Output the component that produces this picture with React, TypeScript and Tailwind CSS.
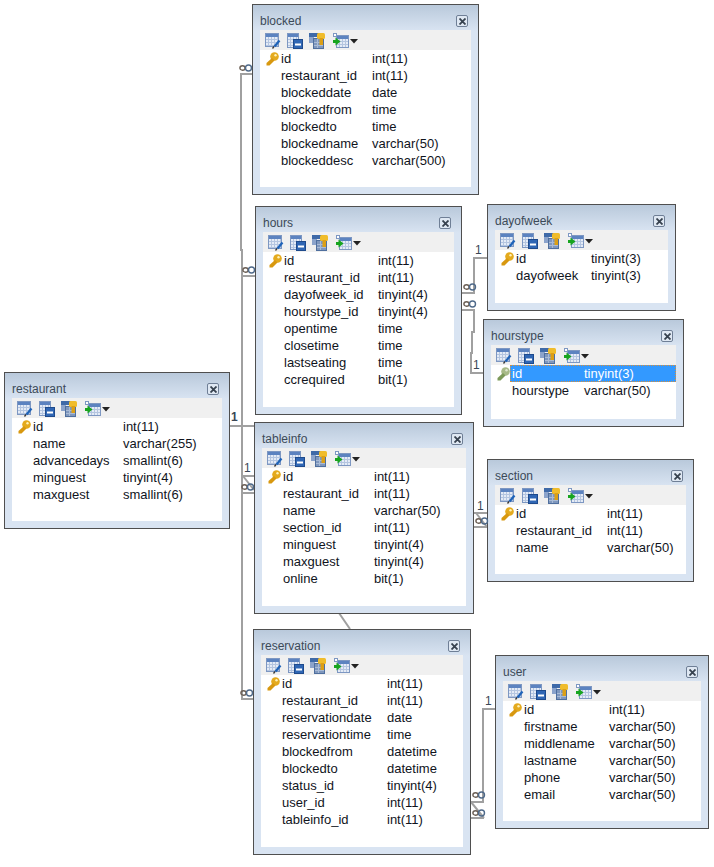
const FONT = "font-['Liberation_Sans',sans-serif]";

type Row = [string, string];
type T = {
  name: string; x: number; y: number; w: number; h: number; typeX: number; rows: Row[]; selected?: number;
};

const tables: T[] = [
  { name: "blocked", x: 252, y: 4, w: 227, h: 191, typeX: 120, rows: [["id","int(11)"],["restaurant_id","int(11)"],["blockeddate","date"],["blockedfrom","time"],["blockedto","time"],["blockedname","varchar(50)"],["blockeddesc","varchar(500)"]] },
  { name: "hours", x: 255, y: 206, w: 207, h: 209, typeX: 123, rows: [["id","int(11)"],["restaurant_id","int(11)"],["dayofweek_id","tinyint(4)"],["hourstype_id","tinyint(4)"],["opentime","time"],["closetime","time"],["lastseating","time"],["ccrequired","bit(1)"]] },
  { name: "dayofweek", x: 487, y: 204, w: 189, h: 107, typeX: 104, rows: [["id","tinyint(3)"],["dayofweek","tinyint(3)"]] },
  { name: "hourstype", x: 483, y: 319, w: 201, h: 108, typeX: 101, selected: 0, rows: [["id","tinyint(3)"],["hourstype","varchar(50)"]] },
  { name: "restaurant", x: 4, y: 372, w: 226, h: 157, typeX: 119, rows: [["id","int(11)"],["name","varchar(255)"],["advancedays","smallint(6)"],["minguest","tinyint(4)"],["maxguest","smallint(6)"]] },
  { name: "tableinfo", x: 254, y: 422, w: 220, h: 192, typeX: 120, rows: [["id","int(11)"],["restaurant_id","int(11)"],["name","varchar(50)"],["section_id","int(11)"],["minguest","tinyint(4)"],["maxguest","tinyint(4)"],["online","bit(1)"]] },
  { name: "section", x: 487, y: 459, w: 207, h: 123, typeX: 120, rows: [["id","int(11)"],["restaurant_id","int(11)"],["name","varchar(50)"]] },
  { name: "reservation", x: 253, y: 629, w: 218, h: 226, typeX: 134, rows: [["id","int(11)"],["restaurant_id","int(11)"],["reservationdate","date"],["reservationtime","time"],["blockedfrom","datetime"],["blockedto","datetime"],["status_id","tinyint(4)"],["user_id","int(11)"],["tableinfo_id","int(11)"]] },
  { name: "user", x: 495, y: 655, w: 214, h: 174, typeX: 114, rows: [["id","int(11)"],["firstname","varchar(50)"],["middlename","varchar(50)"],["lastname","varchar(50)"],["phone","varchar(50)"],["email","varchar(50)"]] },
];

function Grid({ x, y, w, h }: { x: number; y: number; w: number; h: number }) {
  const cols = [];
  for (let d = 3; d < w; d += 3) cols.push(d);
  const rws = [];
  for (let d = 6; d < h; d += 3) rws.push(d);
  return (
    <g>
      <rect x={x + 0.5} y={y + 0.5} width={w} height={h} fill="#e4ebf6" stroke="#7d97c2" />
      <rect x={x + 1} y={y + 1} width={w - 1} height={3} fill="#5c83c0" />
      {cols.map((d) => <line key={d} x1={x + d + 0.5} x2={x + d + 0.5} y1={y + 4} y2={y + h} stroke="#b4c5e0" />)}
      {rws.map((d) => <line key={d} y1={y + d + 0.5} y2={y + d + 0.5} x1={x + 1} x2={x + w} stroke="#b4c5e0" />)}
    </g>
  );
}

function Tools() {
  return (
    <div className="flex h-[20px] shrink-0 items-start bg-[#f0f0f0] pl-[5px] pt-[3px]">
      <svg width="16" height="16" viewBox="0 0 16 16">
        <Grid x={0} y={0} w={13} h={13} />
        <path d="M14.5 7.5 L9.5 13.5" stroke="#1f63b8" strokeWidth="2.2" />
        <path d="M9 13.5 L7.5 15.5" stroke="#333" strokeWidth="1.3" />
      </svg>
      <svg width="16" height="16" viewBox="0 0 16 16" className="ml-[6px]">
        <Grid x={0} y={0} w={11} h={14} />
        <rect x="6.5" y="6.5" width="9" height="9" fill="#2f66b4" stroke="#1e4a8c" />
        <rect x="8" y="10.5" width="6" height="2" fill="#fff" />
      </svg>
      <svg width="16" height="16" viewBox="0 0 16 16" className="ml-[6px]">
        <rect x="0" y="0" width="14" height="4" fill="#3f6aa8" />
        <rect x="0" y="4" width="5" height="6" fill="#8ba3cb" />
        <rect x="4.5" y="5.5" width="10" height="10" fill="#7f97bd" stroke="#4f6f9e" />
        <path d="M5 9.5h9M5 12.5h9M8.5 6v9" stroke="#a9bbd6" />
        <rect x="8" y="0" width="8" height="6" rx="1.5" fill="#f0bc2a" />
        <rect x="10.5" y="5" width="3.5" height="7" fill="#dc9f14" />
      </svg>
      <svg width="16" height="16" viewBox="0 0 16 16" className="ml-[8px]">
        <rect x="0.5" y="0.5" width="3" height="3" fill="#fff" stroke="#7d97c2" />
        <Grid x={3} y={2} w={12} h={12} />
        <path d="M0 7h2.5V4.5L7.5 8.5 2.5 12.5V10H0z" fill="#17a51f" />
      </svg>
      <svg width="8" height="5" viewBox="0 0 8 5" className="ml-px mt-[6px]">
        <path d="M0 0h8L4 4.5z" fill="#222" />
      </svg>
    </div>
  );
}

function Key({ faded }: { faded?: boolean }) {
  return (
    <svg width="13" height="14" viewBox="0 0 13 14" className="mt-[2px]">
      <circle cx="8.5" cy="4.5" r="4.3" fill={faded ? "#a8ba88" : "#e4aa1e"} />
      <circle cx="9.5" cy="3.2" r="1.2" fill={faded ? "#dfe8d0" : "#fff1b8"} />
      <path d="M6 6 L0.5 11 V13.5 H3.5 L8.5 8.5" fill={faded ? "#7d9a5a" : "#d8980f"} />
    </svg>
  );
}

function Table({ t }: { t: T }) {
  return (
    <div className="absolute flex flex-col border border-[#4f4f4f] bg-[linear-gradient(#b9c9db,#d9e4f2_26px)] px-[7px] pb-[7px]" style={{ left: t.x, top: t.y, width: t.w, height: t.h }}>
      <div className="flex h-[25px] shrink-0 items-center justify-between pr-[3px] pt-[7px]">
        <span className="text-[12px] leading-none text-[#3c4a58]">{t.name}</span>
        <span className="flex h-[12px] w-[12px] items-center justify-center rounded-[2px] border border-[#6f7f96] bg-[#dfe8f3] text-[#37424f]">
          <svg width="7" height="7" viewBox="0 0 7 7"><path d="M0.5 0.5 L6.5 6.5 M6.5 0.5 L0.5 6.5" stroke="currentColor" strokeWidth="1.8" /></svg>
        </span>
      </div>
      <div className="flex min-h-0 flex-1 flex-col bg-white">
        <Tools />
        <div className="flex flex-col">
          {t.rows.map(([n, ty], i) => (
            <div key={n} className="flex h-[17px] items-start pl-[6px]">
              <div className="h-[17px] w-[13px] shrink-0">{i === 0 && <Key faded={t.selected === 0} />}</div>
              <div className={`flex h-[17px] flex-1 items-center pl-[2px] text-[13px] ${t.selected === i ? "bg-[#3399ff] text-white outline-1 -outline-offset-1 outline-dotted outline-[#d9903a]" : "text-[#10141c]"}`}>
                <span className="shrink-0" style={{ width: t.typeX - 8 - 21 }}>{n}</span>
                <span>{ty}</span>
              </div>
            </div>
          ))}
        </div>
      </div>
    </div>
  );
}

function Inf({ x, y }: { x: number; y: number }) {
  return (
    <svg width="14" height="8" viewBox="0 0 14 8" className="absolute" style={{ left: x, top: y }}>
      <ellipse cx="3.5" cy="4" rx="2.6" ry="2.2" fill="none" stroke="#6b5f55" strokeWidth="1.4" />
      <ellipse cx="9.5" cy="4" rx="3" ry="3" fill="none" stroke="#4f6a8a" strokeWidth="1.4" />
    </svg>
  );
}

function One({ x, y, bold }: { x: number; y: number; bold?: boolean }) {
  return <span className={`absolute text-[12px] leading-none text-[#3a4656] ${bold ? "font-bold" : "font-normal"}`} style={{ left: x, top: y }}>1</span>;
}

const lines = [
  "M252 74H241V250H242V699H253",
  "M242 276H255",
  "M230 426H255",
  "M243 476H254",
  "M243 493H254",
  "M243 476L254 490",
  "M487 258H474V293H462",
  "M462 310H474V332H472V353H471V373H483",
  "M339 613L350 629",
  "M474 513H487",
  "M474 527H487",
  "M476 513L487 527",
  "M495 709H483V802H471",
  "M471 802L484 818",
  "M471 818H484",
];

export default function App() {
  return (
    <div className={`relative h-[867px] w-[714px] overflow-hidden bg-white ${FONT}`}>
      <svg width="714" height="867" className="absolute left-0 top-0">
        {lines.map((d) => <path key={d} d={d} fill="none" stroke="#a0a0a0" strokeWidth="2" />)}
      </svg>
      {tables.map((t) => <Table key={t.name} t={t} />)}
      <Inf x={239} y={64} />
      <Inf x={242} y={266} />
      <Inf x={241} y={483} />
      <Inf x={240} y={689} />
      <Inf x={463} y={283} />
      <Inf x={463} y={300} />
      <Inf x={475} y={517} />
      <Inf x={472} y={791} />
      <Inf x={472} y={809} />
      <One x={231} y={411} bold />
      <One x={244} y={462} />
      <One x={475} y={244} />
      <One x={473} y={359} />
      <One x={477} y={500} />
      <One x={485} y={695} />
    </div>
  );
}
